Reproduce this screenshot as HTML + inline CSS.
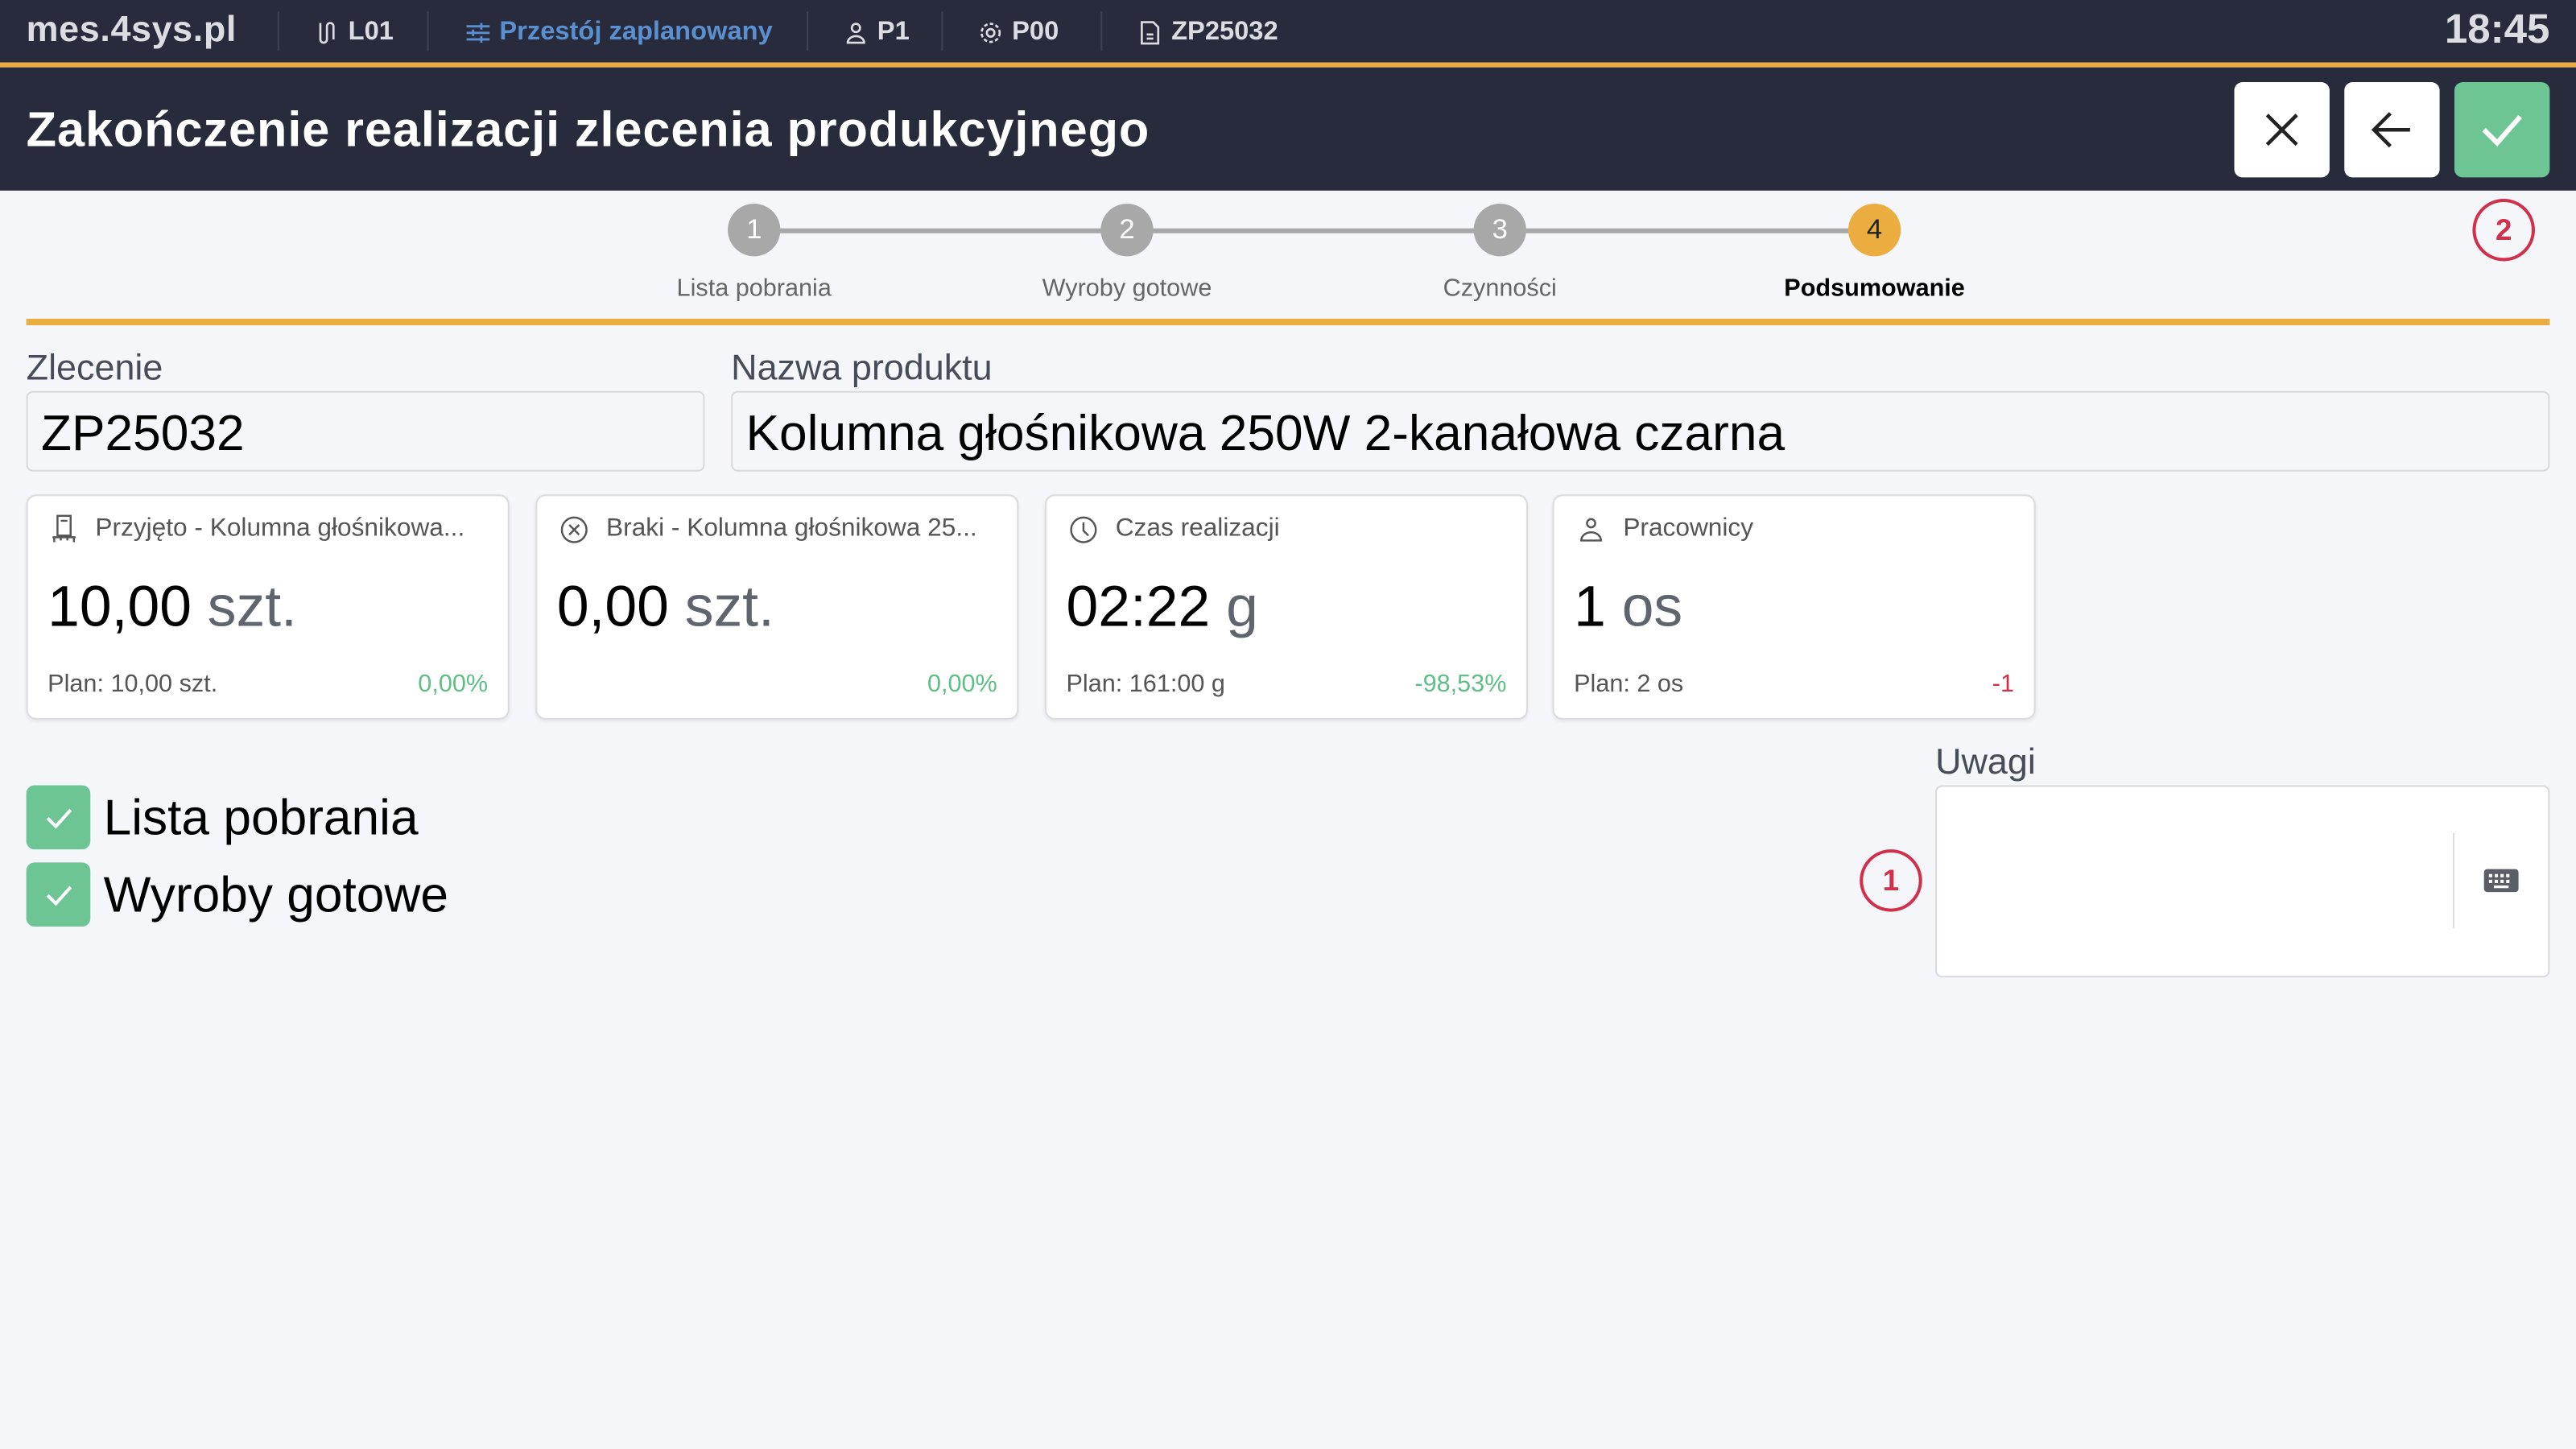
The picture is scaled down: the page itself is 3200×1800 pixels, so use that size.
<!DOCTYPE html>
<html><head><meta charset="utf-8"><style>
*{margin:0;padding:0;box-sizing:border-box}
html,body{width:3200px;height:1800px;overflow:hidden;background:#f5f6fa}
#s{position:absolute;left:0;top:0;width:1568px;height:882px;transform:scale(2.040816);transform-origin:0 0;font-family:"Liberation Sans",sans-serif;background:#f5f6fa}
.a{position:absolute}
.top{left:0;top:0;width:1568px;height:38px;background:#282b3c}
.ol{left:0;top:38px;width:1568px;height:3px;background:#ecad40}
.tb{left:0;top:41px;width:1568px;height:75px;background:#282b3c}
.ti{color:#dcdde2;font-weight:bold;font-size:16px;top:11px;display:flex;align-items:center;gap:5px}
.sep{top:7px;width:1px;height:24px;background:#3d4152}
.btn{top:50px;width:58px;height:58px;border-radius:5px;background:#fff;display:flex;align-items:center;justify-content:center}
.c{width:32px;height:32px;border-radius:50%;background:#a8a8a8;color:#fff;font-size:17px;display:flex;align-items:center;justify-content:center;top:124px}
.sl{top:167px;font-size:15px;color:#666;width:200px;text-align:center}
.lab{font-size:22px;color:#464c58}
.inp{height:49px;background:#f5f6fa;border:1px solid #d9d9dc;border-radius:4px;font-size:30.5px;color:#000;padding-left:8px;line-height:50px}
.card{top:301px;width:294px;height:137px;background:#fff;border:1px solid #dcdcde;border-radius:6px;box-shadow:0 1px 2px rgba(0,0,0,.08)}
.ch{position:absolute;left:14px;top:11px;font-size:15.5px;color:#555;display:flex;align-items:center;gap:11px;white-space:nowrap}
.cv{position:absolute;left:12px;top:48px;font-size:35px;color:#000}
.cv span{color:#60646c}
.cp{position:absolute;left:12px;top:106px;font-size:15px;color:#555}
.cr{position:absolute;right:12px;top:106px;font-size:15px;color:#5fbf86}
.rc{width:38px;height:38px;border:2.5px solid #d1304b;border-radius:50%;color:#d1304b;font-weight:bold;font-size:18px;display:flex;align-items:center;justify-content:center}
.cb{left:16px;width:39px;height:39px;border-radius:5px;background:#6cc593;display:flex;align-items:center;justify-content:center}
.ct{left:63px;font-size:30.5px;color:#000}
</style></head><body><div id="s">
<div class="a top"></div><div class="a ol"></div><div class="a tb"></div>
<div class="a ti" style="left:16px;top:5px;font-size:22px;letter-spacing:0.3px">mes.4sys.pl</div>
<div class="a sep" style="left:169px"></div>
<div class="a ti" style="left:191px"><svg width="16" height="16" viewBox="0 0 16 16" fill="none" stroke="#dcdde2" stroke-width="1.3"><path d="M4 2v10a2 2 0 0 0 4 0V4a2 2 0 0 1 4 0v8"/></svg>L01</div>
<div class="a sep" style="left:260px"></div>
<div class="a ti" style="left:283px;color:#5a8fd0"><svg width="16" height="16" viewBox="0 0 16 16" stroke="#5a8fd0" stroke-width="1.4"><path d="M1 4h14M1 8h14M1 12h14"/><path d="M10 2v4M5 6v4M10 10v4"/></svg>Przestój zaplanowany</div>
<div class="a sep" style="left:491px"></div>
<div class="a ti" style="left:513px"><svg width="16" height="16" viewBox="0 0 16 16" fill="none" stroke="#dcdde2" stroke-width="1.3"><circle cx="8" cy="5" r="2.5"/><path d="M3 14a5 4 0 0 1 10 0z"/></svg>P1</div>
<div class="a sep" style="left:573px"></div>
<div class="a ti" style="left:595px"><svg width="16" height="16" viewBox="0 0 16 16" fill="none" stroke="#dcdde2" stroke-width="1.3"><circle cx="8" cy="8" r="2.3"/><circle cx="8" cy="8" r="5.5" stroke-dasharray="2.2 1.4"/></svg>P00</div>
<div class="a sep" style="left:670px"></div>
<div class="a ti" style="left:692px"><svg width="16" height="16" viewBox="0 0 16 16" fill="none" stroke="#dcdde2" stroke-width="1.3"><path d="M3 1.5h7l3 3v10H3z"/><path d="M6 9h4M6 11.5h4"/></svg>ZP25032</div>
<div class="a ti" style="right:16px;top:4px;font-size:25px">18:45</div>
<div class="a" style="left:16px;top:63px;font-size:30px;font-weight:bold;color:#fff;letter-spacing:0.45px">Zakończenie realizacji zlecenia produkcyjnego</div>
<div class="a btn" style="left:1360px"><svg width="24" height="24" viewBox="0 0 24 24" stroke="#222" stroke-width="2.2"><path d="M3 3l18 18M21 3L3 21"/></svg></div>
<div class="a btn" style="left:1427px"><svg width="26" height="26" viewBox="0 0 26 26" fill="none" stroke="#222" stroke-width="2.2"><path d="M24 13H3M12 3L2 13l10 10"/></svg></div>
<div class="a btn" style="left:1494px;background:#6cc593"><svg width="26" height="26" viewBox="0 0 26 26" fill="none" stroke="#fff" stroke-width="3"><path d="M2 13l8 8L24 5"/></svg></div>
<div class="a" style="left:459px;top:139px;width:682px;height:3px;background:#a8a8a8"></div>
<div class="a c" style="left:443px">1</div><div class="a c" style="left:670px">2</div><div class="a c" style="left:897px">3</div><div class="a c" style="left:1125px;background:#ecad40;color:#222">4</div>
<div class="a sl" style="left:359px">Lista pobrania</div><div class="a sl" style="left:586px">Wyroby gotowe</div><div class="a sl" style="left:813px">Czynności</div><div class="a sl" style="left:1041px;color:#000;font-weight:bold">Podsumowanie</div>
<div class="a rc" style="left:1505px;top:121px">2</div>
<div class="a" style="left:16px;top:194px;width:1536px;height:4px;background:#ecad40"></div>
<div class="a lab" style="left:16px;top:211px">Zlecenie</div>
<div class="a lab" style="left:445px;top:211px">Nazwa produktu</div>
<div class="a inp" style="left:16px;top:238px;width:413px">ZP25032</div>
<div class="a inp" style="left:445px;top:238px;width:1107px">Kolumna głośnikowa 250W 2-kanałowa czarna</div>
<div class="a card" style="left:16px"><div class="ch"><svg width="16" height="18" viewBox="0 0 16 18" fill="none" stroke="#555" stroke-width="1.2"><rect x="4" y="1" width="8" height="12"/><path d="M6 4h4M1 14h14M2 14v3M14 14v3M6 14v2M10 14v2"/></svg>Przyjęto - Kolumna głośnikowa...</div><div class="cv">10,00 <span>szt.</span></div><div class="cp">Plan: 10,00 szt.</div><div class="cr">0,00%</div></div>
<div class="a card" style="left:326px"><div class="ch"><svg width="17" height="17" viewBox="0 0 17 17" fill="none" stroke="#555" stroke-width="1.2"><circle cx="8.5" cy="8.5" r="7.5"/><path d="M5.5 5.5l6 6M11.5 5.5l-6 6"/></svg>Braki - Kolumna głośnikowa 25...</div><div class="cv">0,00 <span>szt.</span></div><div class="cr">0,00%</div></div>
<div class="a card" style="left:636px"><div class="ch"><svg width="17" height="17" viewBox="0 0 17 17" fill="none" stroke="#555" stroke-width="1.2"><circle cx="8.5" cy="8.5" r="7.5"/><path d="M8.5 4v5l3 3"/></svg>Czas realizacji</div><div class="cv">02:22 <span>g</span></div><div class="cp">Plan: 161:00 g</div><div class="cr">-98,53%</div></div>
<div class="a card" style="left:945px"><div class="ch"><svg width="17" height="17" viewBox="0 0 17 17" fill="none" stroke="#555" stroke-width="1.2"><circle cx="8.5" cy="4.5" r="2.5"/><path d="M2.5 15a6 5 0 0 1 12 0z"/></svg>Pracownicy</div><div class="cv">1 <span>os</span></div><div class="cp">Plan: 2 os</div><div class="cr" style="color:#d1304b">-1</div></div>
<div class="a cb" style="top:478px"><svg width="20" height="20" viewBox="0 0 20 20" fill="none" stroke="#fff" stroke-width="2"><path d="M3 10l5 5 9-10"/></svg></div>
<div class="a cb" style="top:525px"><svg width="20" height="20" viewBox="0 0 20 20" fill="none" stroke="#fff" stroke-width="2"><path d="M3 10l5 5 9-10"/></svg></div>
<div class="a ct" style="top:481px">Lista pobrania</div>
<div class="a ct" style="top:528px">Wyroby gotowe</div>
<div class="a lab" style="left:1178px;top:451px">Uwagi</div>
<div class="a" style="left:1178px;top:478px;width:374px;height:117px;background:#fff;border:1px solid #d9d9dc;border-radius:4px"></div>
<div class="a" style="left:1493px;top:507px;width:1px;height:58px;background:#ddd"></div>
<div class="a" style="left:1512px;top:529px;width:21px;height:14px;border-radius:2px;background:#5a5e66"><svg width="21" height="14" viewBox="0 0 21 14"><g fill="#fff"><rect x="3" y="3" width="2" height="2"/><rect x="6.5" y="3" width="2" height="2"/><rect x="10" y="3" width="2" height="2"/><rect x="13.5" y="3" width="2" height="2"/><rect x="3" y="6.5" width="2" height="2"/><rect x="6.5" y="6.5" width="2" height="2"/><rect x="10" y="6.5" width="2" height="2"/><rect x="13.5" y="6.5" width="2" height="2"/><rect x="6" y="10" width="9" height="1.6"/></g></svg></div>
<div class="a rc" style="left:1132px;top:517px">1</div>
</div></body></html>
